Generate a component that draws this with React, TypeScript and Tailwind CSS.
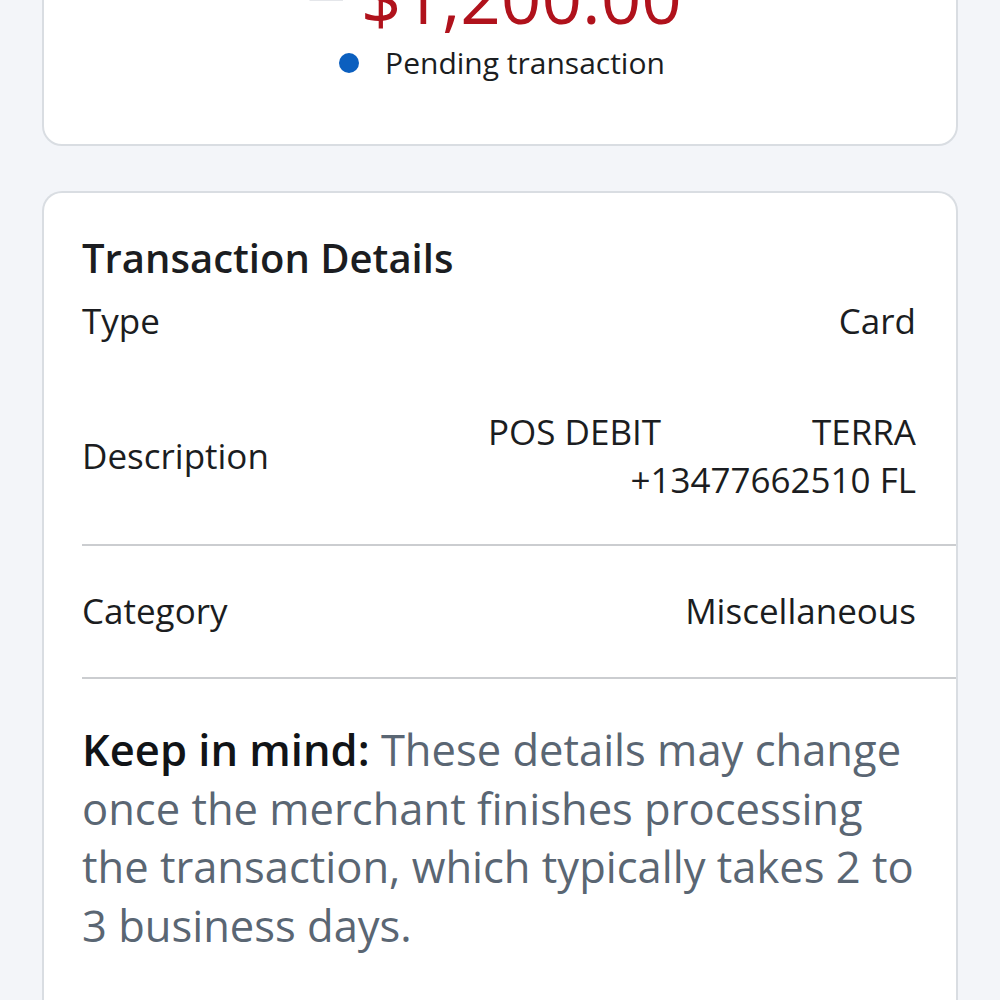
const FONT = "font-['Open_Sans','Noto_Sans',sans-serif]";

type Row = { label: string; value: React.ReactNode };

function DetailRow({ label, value, className }: Row & { className?: string }) {
  return (
    <div className={`flex items-center justify-between ${className ?? ""}`}>
      <span>{label}</span>
      <div className="text-right">{value}</div>
    </div>
  );
}

export default function App() {
  return (
    <div className={`h-[1000px] overflow-hidden bg-[#f3f5f9] px-[42px] text-[#1b1d21] ${FONT}`}>
      {/* amount card, scrolled partly off the top */}
      <div className="-mt-[70px] rounded-[20px] border-2 border-[#d9dde2] bg-white pt-[30px] pb-[62px]">
        <div className="flex justify-center pr-[12px] text-[71px] leading-[70px] text-[#b0121c]">
          <span className="mr-[14px] text-[#e4e6ea]">−</span>
          <span>$1,200.00</span>
        </div>
        <div className="mt-[12px] flex items-center justify-center gap-[26px] pl-[4px] text-[30px] leading-[38px]">
          <span className="h-[20px] w-[20px] rounded-full bg-[#0b5fbf]" />
          <span>Pending transaction</span>
        </div>
      </div>

      <div className="mt-[45px] rounded-t-[20px] border-2 border-b-0 border-[#d9dde2] bg-white pl-[38px] pt-[37px] pb-[60px] text-[35px]">
        <div className="pr-[40px]">
          <h2 className="text-[40px] font-semibold leading-[56px]">Transaction Details</h2>
          <DetailRow label="Type" value="Card" className="mt-[13px] leading-[44px]" />
          <DetailRow
            label="Description"
            className="mt-[65px] leading-[48px]"
            value={
              <>
                <div className="flex w-[428px] justify-between">
                  <span>POS DEBIT</span>
                  <span>TERRA</span>
                </div>
                <div>+13477662510 FL</div>
              </>
            }
          />
        </div>
        <div className="mt-[40px] h-[2px] bg-[#cbcdd0]" />
        <DetailRow label="Category" value="Miscellaneous" className="h-[131px] pr-[40px]" />
        <div className="h-[2px] bg-[#cbcdd0]" />
        <p className="mt-[42px] pr-[40px] text-[43.5px] leading-[58.5px] text-[#5a6673]">
          <span className="font-semibold text-[#111417]">Keep in mind:</span> These details may change once the
          merchant finishes processing the transaction, which typically takes 2 to 3 business days.
        </p>
      </div>
    </div>
  );
}
